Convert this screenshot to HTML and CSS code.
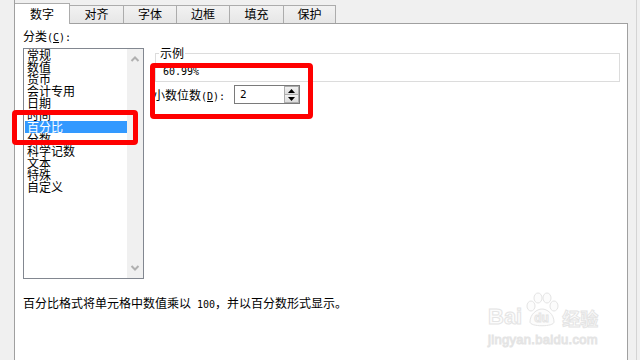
FILE: index.html
```html
<!DOCTYPE html>
<html>
<head>
  <title>设置单元格格式</title>
  <link rel="stylesheet" href="styles.css">
</head>
<body>
  <div class="frame">
    <div class="tabs">
      <div class="tab active w1">数字</div>
      <div class="tab w2">对齐</div>
      <div class="tab w3">字体</div>
      <div class="tab w3">边框</div>
      <div class="tab w2">填充</div>
      <div class="tab w4">保护</div>
    </div>
    <div class="panel">
      <div class="top">
        <div class="category">
          <div class="label">分类<span class="half">(<u>C</u>):</span></div>
          <div class="listbox">
            <ul class="items">
              <li>常规</li>
              <li>数值</li>
              <li>货币</li>
              <li>会计专用</li>
              <li>日期</li>
              <li>时间</li>
              <li class="selected">百分比</li>
              <li>分数</li>
              <li>科学记数</li>
              <li>文本</li>
              <li>特殊</li>
              <li>自定义</li>
            </ul>
            <div class="scrollbar">
              <svg width="16" height="16" viewBox="0 0 16 16"><polyline points="4.5,10 8,6.5 11.5,10" fill="none" stroke="#b0b0b0" stroke-width="2"/></svg>
              <svg width="16" height="16" viewBox="0 0 16 16"><polyline points="4.5,6 8,9.5 11.5,6" fill="none" stroke="#b0b0b0" stroke-width="2"/></svg>
            </div>
          </div>
        </div>
        <div class="options">
          <fieldset class="sample">
            <legend>示例</legend>
            <div class="sample-value">60.99%</div>
          </fieldset>
          <div class="decimal-row">
            <label class="decimal-label">小数位数<span class="half">(<u>D</u>):</span></label>
            <div class="spin">
              <span class="spin-value">2</span>
              <div class="spin-buttons">
                <div class="spin-btn"><svg width="7" height="4" viewBox="0 0 7 4"><polygon points="0,4 3.5,0 7,4" fill="#000"/></svg></div>
                <div class="spin-btn"><svg width="7" height="4" viewBox="0 0 7 4"><polygon points="0,0 3.5,4 7,0" fill="#000"/></svg></div>
              </div>
            </div>
          </div>
        </div>
      </div>
      <p class="desc">百分比格式将单元格中数值乘以<span class="half"> 100</span>，并以百分数形式显示。</p>
    </div>
  </div>
  <div class="edge"></div>

  <!-- annotation boxes drawn over the dialog -->
  <div class="mark mark-list"></div>
  <div class="mark mark-decimal"></div>

  <div class="watermark">
    <div class="wm-top">
      <span class="wm-bai">Bai</span>
      <span class="wm-paw">
        <svg width="40" height="36" viewBox="0 0 40 36">
          <ellipse cx="9" cy="14" rx="4" ry="5" fill="#fcfcfc" stroke="#e4e4e4"/>
          <ellipse cx="16" cy="6" rx="4" ry="5" fill="#fcfcfc" stroke="#e4e4e4"/>
          <ellipse cx="25" cy="6" rx="4" ry="5" fill="#fcfcfc" stroke="#e4e4e4"/>
          <ellipse cx="32" cy="14" rx="4" ry="5" fill="#fcfcfc" stroke="#e4e4e4"/>
          <path d="M8 30 C8 22 15 17 20 17 C25 17 32 22 32 30 C32 35 8 35 8 30 Z" fill="#fcfcfc" stroke="#e4e4e4"/>
        </svg>
        <span class="wm-du">du</span>
      </span>
      <span class="wm-jy">经验</span>
    </div>
    <div class="wm-url">jingyan.baidu.com</div>
  </div>
</body>
</html>
```

FILE: styles.css
```css
body {
  margin: 0;
  width: 640px;
  height: 360px;
  overflow: hidden;
  display: flex;
  background: #f0f0f0;
  font-family: "Noto Sans CJK SC", sans-serif;
  font-size: 12px;
  color: #000;
  padding-left: 14px;
  box-sizing: border-box;
  position: relative;
}
.half {
  font-family: "DejaVu Sans Mono", monospace;
  font-size: 10px;
}
.frame {
  width: 614px;
  height: 360px;
  border-left: 1px solid #a0a0a0;
  box-sizing: border-box;
  display: flex;
  flex-direction: column;
}
.edge {
  width: 1px;
  height: 360px;
  margin-left: 8px;
  background: #d4d4d4;
}
.tabs {
  height: 23px;
  display: flex;
  align-items: flex-end;
}
.tab {
  height: 18px;
  box-sizing: border-box;
  border: 1px solid #acacac;
  border-bottom: none;
  margin-left: -1px;
  background: linear-gradient(#f2f2f2, #e6e6e6);
  text-align: center;
  line-height: 16px;
}
.tab.active {
  height: 21px;
  margin-left: 0;
  margin-bottom: -1px;
  border-left: none;
  background: #fff;
  position: relative;
  z-index: 1;
  line-height: 20px;
}
.w1 { width: 55px; }
.w2 { width: 55px; }
.w3 { width: 54px; }
.w4 { width: 53px; }
.panel {
  flex: 1;
  background: #fff;
  border-top: 1px solid #a0a0a0;
  border-right: 1px solid #a0a0a0;
  padding: 5px 7px 0 8px;
}
.top {
  display: flex;
}
.label {
  height: 14px;
  line-height: 14px;
}
.listbox {
  margin-top: 5px;
  width: 121px;
  height: 231px;
  box-sizing: border-box;
  border: 1px solid #828790;
  display: flex;
}
.items {
  list-style: none;
  margin: 0;
  padding: 0 0 0 1px;
  width: 103px;
  box-sizing: border-box;
}
.items li {
  height: 12px;
  line-height: 12px;
  padding-left: 2px;
  white-space: nowrap;
}
.items li.selected {
  background: #3399ff;
  color: #fff;
}
.scrollbar {
  width: 16px;
  background: #f0f0f0;
  display: flex;
  flex-direction: column;
  justify-content: space-between;
  padding: 2px 0;
}
.scrollbar svg {
  display: block;
}
.options {
  flex: 1;
  margin-left: 11px;
  margin-top: 18px;
}
.sample {
  margin: 0;
  padding: 0 3px;
  border: 1px solid #dcdcdc;
}
.sample legend {
  padding: 0 1px;
  line-height: 12px;
  height: 12px;
}
.sample-value {
  height: 22px;
  box-sizing: border-box;
  padding: 7px 0 0 4px;
  line-height: 11px;
  font-family: "DejaVu Sans Mono", monospace;
  font-size: 10px;
}
.decimal-row {
  margin-top: 3px;
  display: flex;
  align-items: center;
  margin-left: -2px;
}
.decimal-label {
  width: 81px;
}
.spin {
  width: 66px;
  height: 19px;
  box-sizing: border-box;
  border: 1px solid #7a7a7a;
  display: flex;
  align-items: center;
  justify-content: space-between;
}
.spin-value {
  padding-left: 5px;
  font-family: "DejaVu Sans Mono", monospace;
  font-size: 11px;
}
.spin-buttons {
  width: 15px;
  height: 17px;
  display: flex;
  flex-direction: column;
}
.spin-btn {
  flex: 1;
  border: 1px solid #adadad;
  background: linear-gradient(#f2f2f2, #dcdcdc);
  display: flex;
  align-items: center;
  justify-content: center;
}
.spin-btn + .spin-btn {
  border-top: none;
}
.spin-btn svg {
  display: block;
}
.desc {
  margin: 17px 0 0;
  line-height: 14px;
}
.mark {
  position: absolute;
  border: 5px solid #ff0000;
  border-radius: 4px;
  box-sizing: border-box;
}
.mark-list {
  left: 12px;
  top: 110px;
  width: 126px;
  height: 35px;
}
.mark-decimal {
  left: 150px;
  top: 63px;
  width: 163px;
  height: 56px;
}
.watermark {
  position: absolute;
  left: 488px;
  top: 290px;
  color: #fcfcfc;
  -webkit-text-stroke: 1px #e4e4e4;
  font-family: "Liberation Sans", sans-serif;
}
.wm-top {
  display: flex;
  align-items: flex-end;
  height: 38px;
}
.wm-bai {
  font-size: 22px;
  font-weight: bold;
  line-height: 22px;
}
.wm-paw {
  position: relative;
  width: 40px;
  height: 36px;
}
.wm-paw svg {
  display: block;
}
.wm-du {
  position: absolute;
  left: 12px;
  top: 20px;
  font-size: 12px;
  font-weight: bold;
  line-height: 12px;
}
.wm-jy {
  font-family: "Noto Sans CJK SC", sans-serif;
  font-size: 18px;
  font-weight: bold;
  line-height: 20px;
}
.wm-url {
  margin-top: 5px;
  font-size: 13px;
  line-height: 14px;
  letter-spacing: 0.3px;
}
```
